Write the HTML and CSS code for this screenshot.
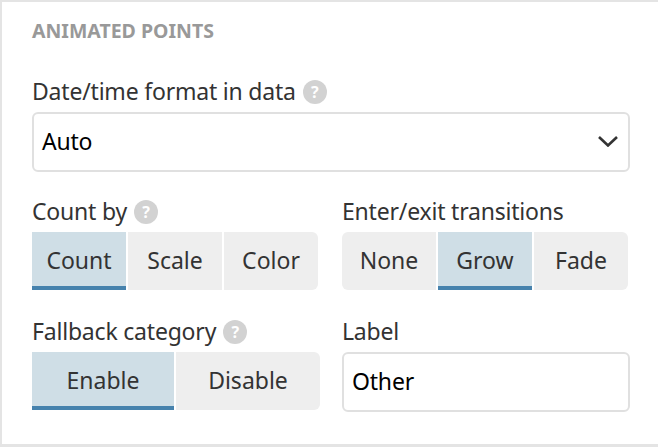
FILE: index.html
```html
<!DOCTYPE html>
<html>
<head>
  <meta charset="UTF-8">
  <title>Animated points</title>
  <link rel="stylesheet" href="styles.css">
</head>
<body>
  <div class="panel">
    <h2 class="panel-title">ANIMATED POINTS</h2>

    <div class="field">
      <div class="label">Date/time format in data <span class="help">?</span></div>
      <div class="select">
        <span>Auto</span>
        <svg class="chevron" width="20" height="12" viewBox="0 0 20 12">
          <path d="M1 2 L10 10.5 L19 2" fill="none" stroke="#333" stroke-width="2.6"/>
        </svg>
      </div>
    </div>

    <div class="columns">
      <div class="field">
        <div class="label">Count by <span class="help">?</span></div>
        <div class="buttons">
          <div class="btn active">Count</div>
          <div class="btn">Scale</div>
          <div class="btn">Color</div>
        </div>
      </div>
      <div class="field">
        <div class="label">Enter/exit transitions</div>
        <div class="buttons">
          <div class="btn">None</div>
          <div class="btn active">Grow</div>
          <div class="btn">Fade</div>
        </div>
      </div>
      <div class="field">
        <div class="label">Fallback category <span class="help">?</span></div>
        <div class="buttons two">
          <div class="btn active">Enable</div>
          <div class="btn">Disable</div>
        </div>
      </div>
      <div class="field">
        <div class="label">Label</div>
        <div class="input">Other</div>
      </div>
    </div>
  </div>
</body>
</html>
```

FILE: styles.css
```css
html, body {
  margin: 0;
  background: #fff;
}
body {
  font-family: "Noto Sans", sans-serif;
  height: 448px;
  overflow: hidden;
}
.panel {
  box-sizing: border-box;
  height: 447px;
  padding: 17px 28px 0 30px;
  border-top: 2px solid #e4e4e4;
  border-left: 2px solid #e4e4e4;
  border-bottom: 3px solid #e4e4e4;
}
.panel-title {
  margin: 0 0 34px;
  font-size: 19.5px;
  line-height: 24px;
  font-weight: 700;
  color: #999;
}
.label {
  display: flex;
  align-items: center;
  gap: 7px;
  height: 28px;
  margin-bottom: 7px;
  font-size: 23px;
  letter-spacing: -0.2px;
  color: #333;
}
.help {
  width: 24px;
  height: 24px;
  margin-top: 2px;
  border-radius: 50%;
  background: #d2d2d2;
  color: #fff;
  font-size: 16px;
  font-weight: 700;
  line-height: 24px;
  text-align: center;
}
.select, .input {
  box-sizing: border-box;
  display: flex;
  align-items: center;
  justify-content: space-between;
  height: 60px;
  padding: 0 10px 2px 8px;
  border: 2px solid #e0e0e0;
  border-radius: 6px;
  font-size: 23px;
  letter-spacing: -0.2px;
  color: #000;
}
.columns {
  display: grid;
  grid-template-columns: 288px 288px;
  column-gap: 22px;
  row-gap: 27px;
  margin-top: 25px;
}
.buttons {
  display: flex;
  gap: 2px;
  width: 286px;
  height: 58px;
}
.buttons.two {
  width: 288px;
}
.buttons.two .btn:first-child {
  flex: 0 0 142px;
}
.btn {
  flex: 1;
  box-sizing: border-box;
  display: flex;
  align-items: center;
  justify-content: center;
  padding-top: 2px;
  border-bottom: 4px solid transparent;
  background: #eee;
  font-size: 23px;
  color: #333;
}
.btn:first-child {
  border-radius: 6px 0 0 6px;
}
.btn:last-child {
  border-radius: 0 6px 6px 0;
}
.btn.active {
  background: #cfdee6;
  border-bottom-color: #4682ad;
  border-radius: 0;
}
```
